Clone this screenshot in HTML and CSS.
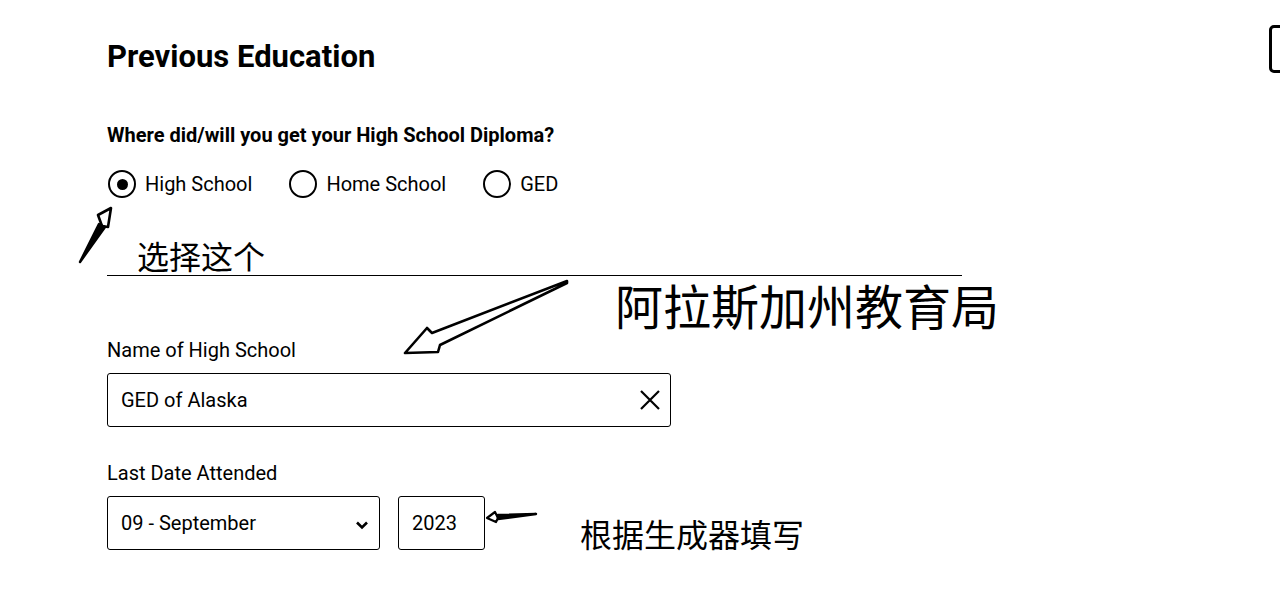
FILE: index.html
```html
<!DOCTYPE html>
<html lang="en">
<head>
<meta charset="utf-8">
<title>Previous Education</title>
<link rel="stylesheet" href="styles.css">
</head>
<body>
<div class="page">
  <header class="topbar">
    <h1 class="title">Previous Education</h1>
    <div class="side-btn"></div>
  </header>

  <form class="form">
    <p class="question">Where did/will you get your High School Diploma?</p>
    <div class="radios">
      <label class="radio"><span class="dot checked"></span>High School</label>
      <label class="radio"><span class="dot"></span>Home School</label>
      <label class="radio"><span class="dot"></span>GED</label>
    </div>

    <div class="note-select">选择这个</div>
    <div class="note-big">阿拉斯加州教育局</div>

    <div class="label">Name of High School</div>
    <div class="input">
      <span class="input-text">GED of Alaska</span>
      <svg class="clear" width="22" height="22" viewBox="0 0 22 22"><path d="M2 2L20 20M20 2L2 20" stroke="#000" stroke-width="2.2" fill="none"/></svg>
    </div>

    <div class="label label-date">Last Date Attended</div>
    <div class="date-row">
      <div class="select">
        <span>09 - September</span>
        <svg class="chev" width="14" height="10" viewBox="0 0 14 10"><path d="M2 2.5L7 7.5L12 2.5" stroke="#000" stroke-width="2.6" fill="none"/></svg>
      </div>
      <div class="year">2023</div>
      <div class="note-gen">根据生成器填写</div>
    </div>
  </form>

  <svg class="marks" width="1280" height="589" viewBox="0 0 1280 589">
    <path d="M80 262 L99 224 L105 227 Z" fill="#000" stroke="#000" stroke-width="2.5" stroke-linejoin="round"/>
    <path d="M102 226 L98 215 L111 208 L108 227 Z" fill="none" stroke="#000" stroke-width="2.6" stroke-linejoin="round"/>
    <path d="M567 281 L432 333 L427 328 L405 353 L438 352 L440 345 L567 283 Z" fill="none" stroke="#000" stroke-width="2.6" stroke-linejoin="round"/>
    <path d="M536 514 L498 515 L498 519 Z" fill="#000" stroke="#000" stroke-width="2.4" stroke-linejoin="round"/>
    <path d="M487 518 L495 512 L498 518 L496 522 Z" fill="none" stroke="#000" stroke-width="2.2" stroke-linejoin="round"/>
  </svg>
</div>
</body>
</html>
```

FILE: styles.css
```css
html, body {
  margin: 0;
  padding: 0;
  background: #fff;
  overflow: hidden;
}

body {
  font-family: Roboto, "Liberation Sans", "Noto Sans CJK SC", sans-serif;
  color: #000;
}

.page {
  position: relative;
  width: 1280px;
  height: 589px;
  overflow: hidden;
}

.topbar {
  display: flex;
  align-items: flex-start;
  padding: 38px 0 0 107px;
}

.title {
  margin: 0;
  font-size: 31px;
  font-weight: 700;
  line-height: 38px;
}

.side-btn {
  margin-left: auto;
  margin-top: -13px;
  margin-right: -40px;
  width: 45px;
  height: 42px;
  border: 3px solid #000;
  border-radius: 5px;
}

.form {
  padding-left: 107px;
  width: 855px;
}

.question {
  margin: 47px 0 0;
  font-size: 20px;
  font-weight: 700;
  line-height: 24px;
}

.radios {
  display: flex;
  margin-top: 23px;
  gap: 36px;
}

.radio {
  display: flex;
  align-items: center;
  gap: 9px;
  font-size: 20px;
  line-height: 28px;
}

.dot {
  box-sizing: border-box;
  width: 28px;
  height: 28px;
  margin-left: 1px;
  border: 2px solid #000;
  border-radius: 50%;
  display: flex;
  align-items: center;
  justify-content: center;
}

.dot.checked::after {
  content: "";
  width: 11px;
  height: 11px;
  border-radius: 50%;
  background: #000;
}

.note-select {
  margin-top: 37px;
  padding-left: 30px;
  font-family: "Noto Sans CJK SC", sans-serif;
  font-size: 32px;
  line-height: 40px;
  border-bottom: 1px solid #000;
}

.note-big {
  padding-left: 508px;
  font-family: "Noto Sans CJK SC", sans-serif;
  font-size: 48px;
  line-height: 52px;
  margin-top: 2px;
  white-space: nowrap;
}

.label {
  font-size: 20px;
  line-height: 22px;
  margin-top: 9px;
}

.input {
  box-sizing: border-box;
  margin-top: 12px;
  width: 564px;
  height: 54px;
  border: 1px solid #000;
  border-radius: 3px;
  display: flex;
  align-items: center;
  justify-content: space-between;
  padding: 0 9px 0 13px;
  font-size: 20px;
}

.label-date {
  margin-top: 35px;
}

.date-row {
  display: flex;
  align-items: flex-start;
  margin-top: 12px;
}

.select {
  box-sizing: border-box;
  width: 273px;
  height: 54px;
  border: 1px solid #000;
  border-radius: 3px;
  display: flex;
  align-items: center;
  justify-content: space-between;
  padding: 0 10px 0 13px;
  font-size: 20px;
}

.chev {
  margin-top: 4px;
}

.year {
  box-sizing: border-box;
  margin-left: 18px;
  width: 87px;
  height: 54px;
  border: 1px solid #000;
  border-radius: 3px;
  display: flex;
  align-items: center;
  padding-left: 13px;
  font-size: 20px;
}

.note-gen {
  margin-left: 95px;
  margin-top: 15px;
  font-family: "Noto Sans CJK SC", sans-serif;
  font-size: 32px;
  line-height: 44px;
  white-space: nowrap;
}

.marks {
  position: absolute;
  top: 0;
  left: 0;
  pointer-events: none;
}
```
